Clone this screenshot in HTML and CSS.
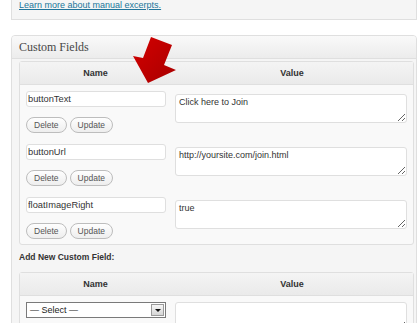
FILE: index.html
```html
<!DOCTYPE html>
<html>
<head>
<meta charset="utf-8">
<link rel="stylesheet" href="styles.css">
</head>
<body>
<div class="wrap">
  <div class="excerpt-box"><a href="#" class="learn">Learn more about manual excerpts.</a></div>
  <div class="postbox">
    <h3 class="hndle">Custom Fields</h3>
    <div class="inside">
      <div class="cf-table">
        <div class="th">Name</div>
        <div class="th">Value</div>

        <div class="cell name-cell">
          <input class="key" type="text" value="buttonText">
          <div class="btns"><button class="btn">Delete</button><button class="btn">Update</button></div>
        </div>
        <div class="cell value-cell"><textarea class="val" spellcheck="false">Click here to Join</textarea></div>

        <div class="cell name-cell">
          <input class="key" type="text" value="buttonUrl">
          <div class="btns"><button class="btn">Delete</button><button class="btn">Update</button></div>
        </div>
        <div class="cell value-cell"><textarea class="val" spellcheck="false">http://yoursite.com/join.html</textarea></div>

        <div class="cell name-cell">
          <input class="key" type="text" value="floatImageRight">
          <div class="btns"><button class="btn">Delete</button><button class="btn">Update</button></div>
        </div>
        <div class="cell value-cell"><textarea class="val" spellcheck="false">true</textarea></div>
      </div>

      <p class="add-new">Add New Custom Field:</p>

      <div class="cf-table">
        <div class="th">Name</div>
        <div class="th">Value</div>
        <div class="cell name-cell">
          <div class="select"><span class="sel-label">— Select —</span><span class="drop"></span></div>
        </div>
        <div class="cell value-cell new-value"><textarea class="val" spellcheck="false"></textarea></div>
      </div>
    </div>
  </div>
</div>

<svg class="arrow" width="50" height="52" viewBox="0 0 50 52">
  <defs>
    <linearGradient id="ag" x1="0" y1="0" x2="1" y2="1">
      <stop offset="0" stop-color="#d40000"/>
      <stop offset="1" stop-color="#a80000"/>
    </linearGradient>
  </defs>
  <polygon points="21,3 42,11 34,31 46,36 18,49 3,22 13,24" fill="url(#ag)"/>
</svg>
</body>
</html>
```

FILE: styles.css
```css
* { box-sizing: border-box; }

body {
  margin: 0;
  background: #fff;
  font-family: "Liberation Sans", Arial, sans-serif;
  color: #333;
  position: relative;
  height: 323px;
  overflow: hidden;
}

.wrap {
  padding: 0 2px 0 11px;
}

.excerpt-box {
  height: 20px;
  border: 1px solid #dfdfdf;
  border-top: 0;
  background: #f5f5f5;
  padding: 0 0 0 7px;
  margin-bottom: 15px;
  font-size: 9px;
  line-height: 11px;
}

.learn {
  color: #21759b;
  text-decoration: underline;
}

.postbox {
  border: 1px solid #dfdfdf;
  border-radius: 4px 4px 0 0;
  background: #f5f5f5;
}

.hndle {
  margin: 0;
  height: 23px;
  padding-left: 7px;
  border-bottom: 1px solid #dfdfdf;
  border-radius: 3px 3px 0 0;
  background: linear-gradient(#f9f9f9, #ececec);
  font: normal 12px/22px "Liberation Serif", serif;
  color: #464646;
}

.inside {
  padding: 2px 2px 8px 7px;
}

.cf-table {
  display: grid;
  grid-template-columns: 151px 1fr;
  border: 1px solid #dfdfdf;
  border-radius: 3px;
  background: #f9f9f9;
}

.th {
  height: 23px;
  border-bottom: 1px solid #dfdfdf;
  background: linear-gradient(#f4f4f4, #eaeaea);
  font-size: 9px;
  font-weight: bold;
  line-height: 22px;
  text-align: center;
  color: #333;
}

.cell {
  padding: 6px 0 5px;
}

.name-cell {
  padding-left: 6px;
}

.key {
  display: block;
  width: 140px;
  height: 16px;
  margin: 0;
  padding: 0 1px;
  border: 1px solid #dfdfdf;
  border-radius: 3px;
  background: #fff;
  font: 9.3px "Liberation Sans", Arial, sans-serif;
  color: #333;
  outline: none;
}

.btns {
  display: flex;
  gap: 3px;
  margin-top: 10px;
}

.btn {
  height: 16px;
  margin: 0;
  padding: 0 7px;
  border: 1px solid #bdbdbd;
  border-radius: 9px;
  background: linear-gradient(#fefefe, #eeeeee);
  font: 8.5px/14px "Liberation Sans", Arial, sans-serif;
  color: #555;
}

.value-cell {
  padding: 9px 0 0 4px;
}

.new-value {
  padding-top: 6px;
}

.val {
  display: block;
  width: 232px;
  height: 29px;
  margin: 0;
  padding: 2px 3px;
  border: 1px solid #dfdfdf;
  border-radius: 3px;
  background: #fff;
  font: 9px/11px "Liberation Sans", Arial, sans-serif;
  color: #333;
  outline: none;
}

.add-new {
  margin: 6px 0 9px;
  font-size: 8.5px;
  font-weight: bold;
  line-height: 12px;
  color: #333;
}

.select {
  display: flex;
  align-items: center;
  width: 140px;
  height: 16px;
  padding: 0 1px 0 3px;
  border: 1px solid #7a7a7a;
  background: #fff;
  font-size: 9px;
  color: #222;
}

.sel-label {
  flex: 1;
}

.drop {
  display: flex;
  align-items: center;
  justify-content: center;
  width: 13px;
  height: 12px;
  border: 1px solid #9a9a9a;
  background: linear-gradient(#f6f6f6, #d6d6d6);
}

.drop::after {
  content: "";
  border-left: 3px solid transparent;
  border-right: 3px solid transparent;
  border-top: 3px solid #111;
}

.arrow {
  position: absolute;
  left: 130px;
  top: 34px;
}
```
